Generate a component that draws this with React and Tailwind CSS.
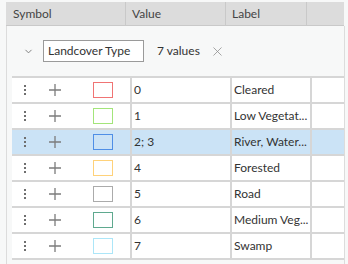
import { X, ChevronDown } from "lucide-react";

const rows = [
  { value: "0", label: "Cleared", color: "#f07474" },
  { value: "1", label: "Low Vegetat...", color: "#a3e57a" },
  { value: "2; 3", label: "River, Water...", color: "#4f8fe6", selected: true },
  { value: "4", label: "Forested", color: "#ffd27a" },
  { value: "5", label: "Road", color: "#ababab" },
  { value: "6", label: "Medium Veg...", color: "#5fa98f" },
  { value: "7", label: "Swamp", color: "#ace6f8" },
];

const Dots = () => (
  <div className="flex w-[2px] flex-col gap-[2px]">
    <span className="h-[2px] w-[2px] bg-[#6f6f6f]" />
    <span className="h-[2px] w-[2px] bg-[#6f6f6f]" />
    <span className="h-[2px] w-[2px] bg-[#6f6f6f]" />
  </div>
);

const Plus = () => (
  <svg width="12" height="12" viewBox="0 0 12 12" className="block">
    <path d="M6 0V12M0 6H12" stroke="#7c7c7c" strokeWidth="1.3" />
  </svg>
);

export default function App() {
  return (
    <div
      className="h-[264px] w-[348px] overflow-hidden bg-[#f7f8f8] pt-[2px] text-[12px] text-[#333]"
      style={{ fontFamily: 'Lato, "Open Sans", sans-serif' }}
    >
      {/* Header */}
      <div className="ml-[6px] flex h-[24px] w-[338px] border-b border-[#c9c9c9] bg-[#dcdcdc] text-[#444]">
        <div className="flex w-[120px] items-center border-r border-[#c9c9c9] pl-[7px]">Symbol</div>
        <div className="flex w-[100px] items-center border-r border-[#c9c9c9] pl-[6px]">Value</div>
        <div className="flex w-[81px] items-center border-r border-[#c9c9c9] pl-[6px]">Label</div>
        <div className="flex-1" />
      </div>

      <div className="ml-[6px] h-[240px] w-[339px] border-x border-[#dcdcdc]">
        {/* Group row */}
        <div className="flex h-[50px] items-center">
          <ChevronDown size={11} strokeWidth={2} color="#777" className="ml-[16px]" />
          <div className="ml-[9px] flex h-[22px] w-[101px] items-center border border-[#9a9a9a] bg-white pl-[4px]">
            Landcover Type
          </div>
          <span className="ml-[13px]">7 values</span>
          <X size={15} strokeWidth={1.2} color="#8a8a8a" className="ml-[10px]" />
        </div>

        {/* Rows */}
        <div className="ml-[5px] w-[332px] border-t-2 border-[#d6d6d6]">
          {rows.map((r) => (
            <div
              key={r.value}
              className={`flex h-[26px] border-b-2 border-[#d6d6d6] ${r.selected ? "bg-[#cbe3f6]" : "bg-white"}`}
            >
              <div className="flex w-[118px] items-center">
                <div className="ml-[12px]">
                  <Dots />
                </div>
                <div className="ml-[23px]">
                  <Plus />
                </div>
                <div
                  className="ml-[32px] h-[16px] w-[20px] border"
                  style={{ borderColor: r.color }}
                />
              </div>
              <div className="w-[2px] bg-[#d6d6d6]" />
              <div className="flex w-[98px] items-center pl-[2px]">{r.value}</div>
              <div className="w-[2px] bg-[#d6d6d6]" />
              <div className="flex w-[78px] items-center whitespace-nowrap pl-[2px]">{r.label}</div>
              <div className="w-[2px] bg-[#d6d6d6]" />
              <div className="flex-1" />
            </div>
          ))}
        </div>
      </div>
    </div>
  );
}
